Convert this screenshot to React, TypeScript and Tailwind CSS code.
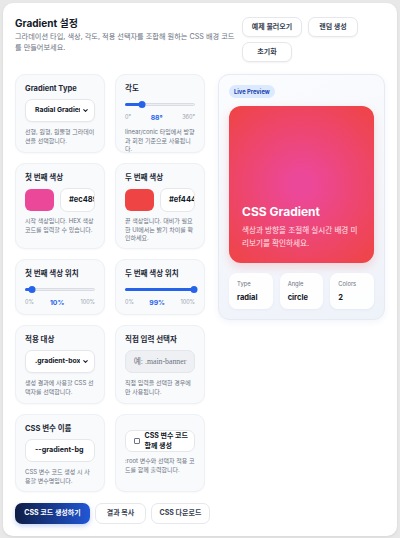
import React from "react";
import { ChevronDown } from "lucide-react";

const Card = ({ children, className = "" }: { children: React.ReactNode; className?: string }) => (
  <div className={`rounded-[10px] border border-[#edf0f4] bg-[#f8fafc] px-[9px] pt-[9px] pb-[9px] shadow-[0_1px_2px_rgba(15,23,42,0.03)] ${className}`}>
    {children}
  </div>
);

const Label = ({ children }: { children: React.ReactNode }) => (
  <div className="text-[7.5px] leading-[9px] font-bold text-[#1f2937]">{children}</div>
);

const Help = ({ children, className = "" }: { children: React.ReactNode; className?: string }) => (
  <p className={`text-[6px] leading-[8.6px] text-[#6b7280] ${className}`}>{children}</p>
);

const SelectBox = ({ value }: { value: string }) => (
  <div className="mt-[6px] flex h-[23px] items-center rounded-[7px] border border-[#e5e7eb] bg-white pl-[9px] pr-[5px] shadow-[0_1px_2px_rgba(15,23,42,0.04)]">
    <span className="flex-1 overflow-hidden whitespace-nowrap text-[6.8px] font-bold text-[#111827]">{value}</span>
    <ChevronDown size={7} strokeWidth={3.5} className="ml-[2px] shrink-0 text-[#111827]" />
  </div>
);

const Slider = ({ pct, min, max, value }: { pct: number; min: string; max: string; value: string }) => (
  <div className="mt-[8px]">
    <div className="relative h-[7px]">
      <div className="absolute left-0 right-0 top-[2px] h-[3px] rounded-full border border-[#d9dde3] bg-[#eceef1]" />
      <div className="absolute left-0 top-[2px] h-[3px] rounded-full bg-[#2563eb]" style={{ width: `${pct}%` }} />
      <div
        className="absolute top-0 h-[7px] w-[7px] -translate-x-1/2 rounded-full bg-[#2563eb]"
        style={{ left: `${pct}%` }}
      />
    </div>
    <div className="mt-[6px] flex items-center justify-between text-[5.5px] leading-[7px] text-[#9ca3af]">
      <span>{min}</span>
      <span className="text-[6.8px] font-bold text-[#2563eb]">{value}</span>
      <span>{max}</span>
    </div>
  </div>
);

const ColorField = ({ color, hex }: { color: string; hex: string }) => (
  <div className="mt-[6px] flex items-center gap-[6px]">
    <div className="h-[22px] w-[29px] shrink-0 rounded-[6px]" style={{ backgroundColor: color }} />
    <div className="flex h-[24px] flex-1 items-center overflow-hidden whitespace-nowrap rounded-[7px] border border-[#e5e7eb] bg-white pl-[8px] text-[7.5px] font-bold text-[#111827]">
      {hex}
    </div>
  </div>
);

const Stat = ({ label, value }: { label: string; value: string }) => (
  <div className="flex-1 rounded-[8px] bg-white/90 pl-[8px] pt-[7px] pb-[7px] shadow-[0_1px_3px_rgba(30,64,175,0.05)]">
    <div className="text-[5.8px] leading-[7px] text-[#6b7280]">{label}</div>
    <div className="mt-[6px] text-[7.5px] leading-[9px] font-bold text-[#111827]">{value}</div>
  </div>
);

const TopButton = ({ children, className = "" }: { children: React.ReactNode; className?: string }) => (
  <button className={`h-[20px] rounded-[7px] border border-[#e5e7eb] bg-white text-[7px] font-bold text-[#374151] shadow-[0_1px_2px_rgba(15,23,42,0.05)] ${className}`}>
    {children}
  </button>
);

export default function App() {
  return (
    <div className="min-h-[538px] bg-[#e8e8e9] p-[3px] font-['Inter','Noto_Sans_CJK_KR',sans-serif]">
      <div className="min-h-[532px] rounded-[10px] bg-white px-[12px] pt-[13px] pb-[12px] shadow-[0_1px_3px_rgba(0,0,0,0.08)]">
        {/* 헤더 */}
        <div className="flex items-start justify-between">
          <div className="w-[220px]">
            <h1 className="text-[10px] leading-[14px] font-bold text-[#111827]">Gradient 설정</h1>
            <p className="mt-[1px] text-[7.2px] leading-[11px] text-[#6b7280]">
              그라데이션 타입, 색상, 각도, 적용 선택자를 조합해 원하는 CSS 배경 코드를 만들어보세요.
            </p>
          </div>
          <div className="flex w-[143px] flex-wrap gap-x-[6px] gap-y-[5px] pt-[1px]">
            <TopButton className="w-[60px]">예제 불러오기</TopButton>
            <TopButton className="w-[50px]">랜덤 생성</TopButton>
            <TopButton className="w-[50px]">초기화</TopButton>
          </div>
        </div>

        {/* 본문 */}
        <div className="mt-[12px] flex items-start gap-[13px]">
          <div className="grid w-[190px] grid-cols-2 grid-rows-[79px_86px_56px_79px_78px] gap-[10px]">
            <Card>
              <Label>Gradient Type</Label>
              <SelectBox value="Radial Gradient" />
              <Help className="mt-[6px]">선형, 원형, 원뿔형 그라데이션을 선택합니다.</Help>
            </Card>
            <Card>
              <Label>각도</Label>
              <Slider pct={24} min="0°" max="360°" value="88°" />
              <Help className="mt-[7px]">linear/conic 타입에서 방향과 회전 기준으로 사용됩니다.</Help>
            </Card>

            <Card>
              <Label>첫 번째 색상</Label>
              <ColorField color="#ec4899" hex="#ec4899" />
              <Help className="mt-[5px]">시작 색상입니다. HEX 색상 코드를 입력할 수 있습니다.</Help>
            </Card>
            <Card>
              <Label>두 번째 색상</Label>
              <ColorField color="#ef4444" hex="#ef4444" />
              <Help className="mt-[5px]">끝 색상입니다. 대비가 필요한 UI에서는 밝기 차이를 확인하세요.</Help>
            </Card>

            <Card>
              <Label>첫 번째 색상 위치</Label>
              <Slider pct={10} min="0%" max="100%" value="10%" />
            </Card>
            <Card>
              <Label>두 번째 색상 위치</Label>
              <Slider pct={99} min="0%" max="100%" value="99%" />
            </Card>

            <Card>
              <Label>적용 대상</Label>
              <SelectBox value=".gradient-box" />
              <Help className="mt-[6px]">생성 결과에 사용할 CSS 선택자를 선택합니다.</Help>
            </Card>
            <Card>
              <Label>직접 입력 선택자</Label>
              <div className="mt-[6px] flex h-[23px] items-center justify-center rounded-[7px] border border-[#e3e6eb] bg-[#eef0f3] font-['Liberation_Serif','Noto_Sans_CJK_KR',serif] text-[7.8px] text-[#6b7280]">
                예: .main-banner
              </div>
              <Help className="mt-[6px]">직접 입력을 선택한 경우에만 사용됩니다.</Help>
            </Card>

            <Card>
              <Label>CSS 변수 이름</Label>
              <div className="mt-[6px] flex h-[23px] items-center rounded-[7px] border border-[#e5e7eb] bg-white pl-[9px] text-[7.2px] font-bold text-[#111827]">
                --gradient-bg
              </div>
              <Help className="mt-[6px]">CSS 변수 코드 생성 시 사용할 변수명입니다.</Help>
            </Card>
            <Card className="pt-[15px]">
              <label className="flex h-[22px] items-center gap-[5px] rounded-[7px] border border-[#e5e7eb] bg-white pl-[8px]">
                <span className="h-[5.5px] w-[5.5px] shrink-0 rounded-[1px] border border-[#6b7280] bg-white" />
                <span className="w-[48px] text-[7px] leading-[10px] font-bold text-[#111827]">CSS 변수 코드 함께 생성</span>
              </label>
              <Help className="mt-[5px]">:root 변수와 선택자 적용 코드를 함께 출력합니다.</Help>
            </Card>
          </div>

          {/* 미리보기 */}
          <div className="flex-1 rounded-[11px] border border-[#e6ebf3] bg-[linear-gradient(160deg,#fbfcfe,#eef2f9)] p-[10px] shadow-[0_2px_6px_rgba(30,64,175,0.06)]">
            <div className="flex">
              <span className="rounded-full bg-[#dbeafe] px-[5px] py-[3px] text-[5.8px] leading-[7px] font-bold text-[#1e40af]">
                Live Preview
              </span>
            </div>
            <div className="mt-[8px] flex h-[157px] flex-col justify-end rounded-[12px] bg-[radial-gradient(circle,#ec4899_10%,#ef4444_99%)] px-[13px] pb-[13px] shadow-[0_4px_10px_rgba(239,68,68,0.18)]">
              <div className="text-[12px] leading-[15px] font-bold text-white">CSS Gradient</div>
              <p className="mt-[5px] text-[7.6px] leading-[13px] text-white/85">
                색상과 방향을 조절해 실시간 배경 미리보기를 확인하세요.
              </p>
            </div>
            <div className="mt-[10px] flex gap-[7px]">
              <Stat label="Type" value="radial" />
              <Stat label="Angle" value="circle" />
              <Stat label="Colors" value="2" />
            </div>
          </div>
        </div>

        {/* 하단 버튼 */}
        <div className="mt-[11px] flex gap-[5px]">
          <button className="h-[21px] w-[75px] rounded-[7px] bg-[linear-gradient(90deg,#0f1d45,#2157d6)] text-[7px] font-bold text-white shadow-[0_2px_5px_rgba(29,78,216,0.25)]">
            CSS 코드 생성하기
          </button>
          <button className="h-[21px] w-[51px] rounded-[7px] border border-[#e5e7eb] bg-white text-[7px] font-bold text-[#374151]">
            결과 복사
          </button>
          <button className="h-[21px] w-[59px] rounded-[7px] border border-[#e5e7eb] bg-white text-[7px] font-bold text-[#374151]">
            CSS 다운로드
          </button>
        </div>
      </div>
    </div>
  );
}
